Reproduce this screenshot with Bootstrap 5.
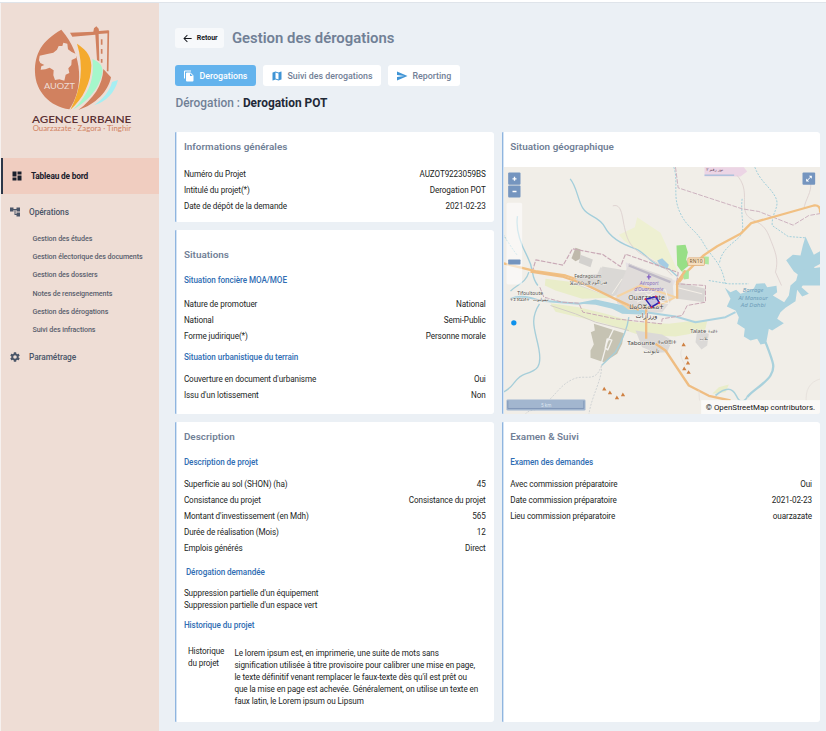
<!DOCTYPE html>
<html lang="fr">
<head>
<meta charset="utf-8">
<meta name="viewport" content="width=device-width, initial-scale=1">
<title>Gestion des dérogations</title>
<link rel="stylesheet" href="https://cdn.jsdelivr.net/npm/bootstrap@5.3.0/dist/css/bootstrap.min.css">
<style>
  body { font-family: Roboto, "Liberation Sans", sans-serif; font-size: 8.15px; line-height: 16px; color: #1b1e23; background: #ebf0f5; height: 731px; overflow: hidden; }
  .topline { height: 3px; background: #fff; border-bottom: 1px solid #dfe4ea; }
  .shell { height: 728px; }
  .side { width: 159.4px; background: #eeddd5; border-left: 1px solid #f6f1ef; flex: none; }
  .brand-area { height: 155px; }
  .side-link { height: 35px; color: #4a5568; font-size: 8.3px; letter-spacing: -.07px; font-weight: 500; padding-left: 8px; }
  .side-link svg { width: 12px; height: 12px; margin-right: 8px; }
  .side-link.current { height: 36px; background: #f0cdc0; color: #1a202c; letter-spacing: -.18px; font-weight: 700; border-left: 2px solid #2d3748; }
  .sub-links { padding: .8px 0 0 31.5px; font-size: 7.15px; letter-spacing: -.09px; font-weight: 500; color: #5a5f6e; line-height: 18.3px; }
  .content-area { padding: 25px 6px 0 16px; }
  .back { width: 48.5px; height: 20px; background: #f7f9fb; border-radius: 3px; font-size: 7px; font-weight: 700; color: #14171c; }
  .page-title { font-size: 14.9px; font-weight: 600; color: #718096; line-height: 20px; }
  .tabs-row { margin-top: 17px; gap: 7.5px; }
  .tab-btn { height: 21px; border-radius: 3px; background: #fff; color: #718096; font-size: 8.85px; font-weight: 500; padding-left: 8px; }
  .tab-btn svg { width: 12px; height: 12px; margin-right: 4px; }
  .tab-btn.on { background: #63b3ed; color: #fff; }
  .w-t1 { width: 80.5px; } .w-t2 { width: 117.5px; } .w-t3 { width: 71.5px; }
  .subtitle { font-size: 11.9px; font-weight: 500; color: #718096; line-height: 16px; margin-top: 9px; }
  .subtitle b { color: #1f2937; font-weight: 700; }
  .panels { margin-top: 21px; gap: 8px; }
  .panel { background: #fff; border-left: 1px solid #8fb5df; border-radius: 1px 3px 3px 1px; padding: 7px 8px 0 7.5px; letter-spacing: -.09px; box-shadow: inset 1px 0 0 #d3e3f4; }
  .panel h2 { font-size: 9.9px; font-weight: 600; line-height: 16px; color: #718096; margin: 0; letter-spacing: .03px; }
  .panel h3 { font-size: 8.15px; font-weight: 500; line-height: 16px; color: #2f6db3; margin: 0; letter-spacing: -.07px; }
  .col-a, .col-b { width: 318.3px; gap: 8px; }
  .h-info { height: 90px; } .h-sit { height: 184px; padding-top: 16.5px; } .h-map { height: 282px; } .h-low { height: 300px; }
  .g5 { margin-top: 5px !important; } .g6 { margin-top: 6px !important; } .g7 { margin-top: 7.5px !important; } .g8 { margin-top: 8.5px !important; } .g9 { margin-top: 9px !important; } .g11 { margin-top: 11px !important; }
  .tight { line-height: 12px; }
  .map-box { margin: 11.5px -8px 0 -6.5px; height: 247.5px; overflow: hidden; border-radius: 0 0 3px 0; letter-spacing: 0; }
  .hist { padding-left: 4px; margin-top: 12px; }
  .hist-label { width: 46.5px; flex: none; }
  .hist-text { padding-top: 2px; }
  .inset-2 { padding-left: 2px; }
</style>
<script src="https://cdn.jsdelivr.net/npm/bootstrap@5.3.0/dist/js/bootstrap.bundle.min.js"></script>
</head>
<body>
<div class="topline"></div>
<div class="shell d-flex">
  <aside class="side">
    <div class="brand-area">
      <svg class="d-block" width="158" height="155" viewBox="1 3 158 155">
        <g transform="scale(.33333)">
          <path d="M184 89C126 122 104 160 105 216C106 274 150 320 208 328C250 270 252 166 184 89Z" fill="#d1815f"/>
          <path d="M117 181L119 167L142 162L160 158L171 149L176 138L187 138L190 128L202 131L204 148L215 156L228 162L228 174L215 180L214 195L205 205L208 219L197 224L193 242L178 238L165 240L160 226L161 211L149 203L136 208L122 209L124 199L133 195L121 189Z" fill="#eeddd5"/>
          <path d="M231 131C251 146 272 159 274 196C274 247 248 299 211 329C244 266 252 199 231 131Z" fill="#f4aa2d"/>
          <path d="M277 177C291 184 306 190 308 212C302 262 262 306 220 328C257 292 286 247 277 177Z" fill="#a5f7cb"/>
          <path d="M310 207L333 232C326 272 286 315 235 330C280 296 308 256 310 207Z" fill="#d1815f"/>
          <path d="M336 246L354 240C344 280 317 305 282 316C309 296 329 274 336 246Z" fill="#a5eef2"/>
          <path d="M210 98L280 95L282 85L289 79L296 86L297 93L326 91V100L296 102L298 184L291 180L286 104L217 110Z" fill="#d1815f"/>
          <path d="M325 92L323 214M305 118V134M305 147V161M305 177V188" stroke="#d1815f" stroke-width="5" fill="none"/>
          <text x="132" y="267" font-size="25" textLength="93" lengthAdjust="spacingAndGlyphs" fill="#eeddd5" font-family="Lato, sans-serif">AUOZT</text>
          <text x="96" y="370" font-size="30" font-weight="600" textLength="298" lengthAdjust="spacingAndGlyphs" fill="#5a3033" font-family="Lato, sans-serif">AGENCE URBAINE</text>
          <text x="98" y="393" font-size="20" textLength="295" lengthAdjust="spacingAndGlyphs" fill="#d1815f" font-family="Lato, sans-serif">Ouarzazate · Zagora · Tinghir</text>
        </g>
      </svg>
    </div>
    <nav>
      <div class="side-link current d-flex align-items-center"><svg viewBox="0 0 24 24" fill="currentColor"><path d="M3 13h8V3H3v10zm0 8h8v-6H3v6zm10 0h8V11h-8v10zm0-18v6h8V3h-8z"/></svg>Tableau de bord</div>
      <div class="side-link d-flex align-items-center"><svg viewBox="0 0 24 24" fill="currentColor"><path d="M22 11V3h-7v3H9V3H2v8h7V8h2v10h4v3h7v-8h-7v3h-2V8h2v3z"/></svg>Opérations</div>
      <ul class="sub-links list-unstyled mb-0">
        <li>Gestion des études</li><li>Gestion électorique des documents</li><li>Gestion des dossiers</li><li>Notes de renseignements</li><li>Gestion des dérogations</li><li>Suivi des infractions</li>
      </ul>
      <div class="side-link d-flex align-items-center"><svg viewBox="0 0 24 24" fill="currentColor"><path d="M19.14 12.94c.04-.3.06-.61.06-.94s-.02-.64-.07-.94l2.03-1.58a.49.49 0 0 0 .12-.61l-1.92-3.32a.49.49 0 0 0-.59-.22l-2.39.96a7 7 0 0 0-1.62-.94l-.36-2.54A.48.48 0 0 0 13.92 2.4h-3.84a.48.48 0 0 0-.48.41l-.36 2.54c-.59.24-1.13.57-1.62.94l-2.39-.96a.49.49 0 0 0-.59.22L2.74 8.87a.48.48 0 0 0 .12.61l2.03 1.58a7.5 7.5 0 0 0 0 1.88l-2.03 1.58a.49.49 0 0 0-.12.61l1.92 3.32c.12.22.37.29.59.22l2.39-.96c.5.38 1.03.7 1.62.94l.36 2.54c.05.24.24.41.48.41h3.84c.24 0 .44-.17.47-.41l.36-2.54a7 7 0 0 0 1.62-.94l2.39.96c.22.08.47 0 .59-.22l1.92-3.32a.48.48 0 0 0-.12-.61zM12 15.6a3.6 3.6 0 1 1 0-7.2 3.6 3.6 0 0 1 0 7.2z"/></svg>Paramétrage</div>
    </nav>
  </aside>

  <main class="content-area flex-grow-1">
    <div class="d-flex align-items-center">
      <div class="back d-flex align-items-center justify-content-center me-2"><svg width="11" height="11" viewBox="0 0 24 24" class="me-1" fill="currentColor"><path d="M21 11H6.8l5.6-5.6L11 4l-8 8 8 8 1.4-1.4L6.8 13H21z"/></svg>Retour</div>
      <div class="page-title">Gestion des dérogations</div>
    </div>
    <div class="tabs-row d-flex">
      <div class="tab-btn on w-t1 d-flex align-items-center"><svg viewBox="0 0 24 24" fill="#fff"><path d="M16 1H4a2 2 0 0 0-2 2v14h2V3h12zm-1 4 6 6v10a2 2 0 0 1-2 2H8a2 2 0 0 1-2-2V7a2 2 0 0 1 2-2zm-1 7h5.500L14 6.500z"/></svg>Derogations</div>
      <div class="tab-btn w-t2 d-flex align-items-center"><svg viewBox="0 0 24 24" fill="#3f94d5"><path fill-rule="evenodd" d="M20.500 3l-.16.03L15 5.1 9 3 3.360 4.900a.5.5 0 0 0-.36.48V20.500c0 .28.22.5.5.5l.16-.03L9 18.900l6 2.100 5.640-1.900a.5.5 0 0 0 .36-.48V3.500a.5.5 0 0 0-.5-.5zM15 19l-6-2.110V5l6 2.110V19z"/></svg>Suivi des derogations</div>
      <div class="tab-btn w-t3 d-flex align-items-center"><svg viewBox="0 0 24 24" fill="#3f94d5"><path d="M2 21 23 12 2 3v7l15 2-15 2z"/></svg>Reporting</div>
    </div>
    <div class="subtitle">Dérogation : <b>Derogation POT</b></div>

    <div class="panels d-flex">
      <div class="col-a d-flex flex-column">
        <section class="panel h-info">
          <h2>Informations générales</h2>
          <div class="g11 d-flex justify-content-between"><span>Numéro du Projet</span><span>AUZOT9223059BS</span></div>
          <div class="d-flex justify-content-between"><span>Intitulé du projet(*)</span><span>Derogation POT</span></div>
          <div class="d-flex justify-content-between"><span>Date de dépôt de la demande</span><span>2021-02-23</span></div>
        </section>
        <section class="panel h-sit">
          <h2>Situations</h2>
          <h3 class="g9">Situation foncière MOA/MOE</h3>
          <div class="g8 d-flex justify-content-between"><span>Nature de promotuer</span><span>National</span></div>
          <div class="d-flex justify-content-between"><span>National</span><span>Semi-Public</span></div>
          <div class="d-flex justify-content-between"><span>Forme judirique(*)</span><span>Personne morale</span></div>
          <h3 class="g5">Situation urbanistique du terrain</h3>
          <div class="g6 d-flex justify-content-between"><span>Couverture en document d'urbanisme</span><span>Oui</span></div>
          <div class="d-flex justify-content-between"><span>Issu d'un lotissement</span><span>Non</span></div>
        </section>
        <section class="panel h-low">
          <h2>Description</h2>
          <h3 class="g9">Description de projet</h3>
          <div class="g6 d-flex justify-content-between"><span>Superficie au sol (SHON) (ha)</span><span>45</span></div>
          <div class="d-flex justify-content-between"><span>Consistance du projet</span><span>Consistance du projet</span></div>
          <div class="d-flex justify-content-between"><span>Montant d'investissement (en Mdh)</span><span>565</span></div>
          <div class="d-flex justify-content-between"><span>Durée de réalisation (Mois)</span><span>12</span></div>
          <div class="d-flex justify-content-between"><span>Emplois générés</span><span>Direct</span></div>
          <h3 class="g7 inset-2">Dérogation demandée</h3>
          <div class="g7 tight">Suppression partielle d'un équipement<br>Suppression partielle d'un espace vert</div>
          <h3 class="g6">Historique du projet</h3>
          <div class="hist d-flex tight">
            <div class="hist-label">Historique<br>du projet</div>
            <div class="hist-text text-nowrap">Le lorem ipsum est, en imprimerie, une suite de mots sans<br>signification utilisée à titre provisoire pour calibrer une mise en page,<br>le texte définitif venant remplacer le faux-texte dès qu'il est prêt ou<br>que la mise en page est achevée. Généralement, on utilise un texte en<br>faux latin, le Lorem ipsum ou Lipsum</div>
          </div>
        </section>
      </div>

      <div class="col-b d-flex flex-column">
        <section class="panel h-map">
          <h2>Situation géographique</h2>
          <div class="map-box">
            <svg class="d-block" width="317" height="247.5" viewBox="503.5 166.5 317 247.5" font-family="'Noto Sans', 'DejaVu Sans', sans-serif">
              <rect x="500" y="160" width="325" height="260" fill="#f1eee8"/>
              <!-- northern half -->
              <g transform="translate(495 125) scale(.33333)" fill="none" stroke-linejoin="round">
                <path d="M370 328L418 305L425 275L495 322L528 395L548 440L520 430L470 400L420 370L385 345Z" fill="#eef0d2"/>
                <path d="M627 125H745L755 138L735 153H627Z" fill="#ecd5e5"/>
                <path d="M627 149H716" stroke="#8fb8d8" stroke-width="3"/>
                <path d="M240 367L255 372V400L240 407L228 398Z" fill="#bfb9ab"/>
                <path d="M255 388L292 402L285 425L250 412Z" fill="#d3d1ce"/>
                <path d="M315 425L385 445L420 480H290Z" fill="#dcdad7"/>
                <path d="M390 410L540 466L532 482H400Z" fill="#e6e1e5"/>
                <path d="M399 417L525 473" stroke="#bdb8c6" stroke-width="7"/>
                <path d="M543 360L570 358L577 380L572 402L580 420L558 438L545 420Z" fill="#98df86"/>
                <path d="M618 392L640 394V417L622 414Z" fill="#aee79f"/>
                <path d="M485 405L500 398L520 418L515 433L496 424Z" fill="#a4cbe3"/>
                <path d="M930 333L942 360L955 388L975 376V415L955 425L975 440V480H905L918 455L895 438L872 404L892 388L915 390L922 360Z" fill="#abd2df"/>
                <path d="M224 160C245 185 245 220 262 248S310 270 328 305S390 360 420 370S465 420 520 430L545 452" stroke="#a3cedb" stroke-width="4"/>
                <path d="M66 272C60 310 70 345 95 392S103 450 127 480" stroke="#a3cedb" stroke-width="4"/>
                <path d="M535 125C550 170 530 210 553 260S600 310 625 355S680 410 690 480M778 125C795 170 825 185 840 215S828 260 830 300L878 333L930 337M740 220C735 255 745 295 740 320S680 360 672 412M22 325C38 350 50 370 66 390M640 465L700 475H760" stroke="#a2cfdb" stroke-width="3" stroke-dasharray="6 4"/>
                <path d="M352 241C390 230 375 310 405 355S490 400 530 450M725 150C760 190 740 230 750 260S800 280 820 330S850 400 840 440L858 480M945 170C950 200 930 220 925 250" stroke="#dccfce" stroke-width="2.5"/>
                <path d="M540 125L548 187L740 250L790 258L893 299L940 270L975 264" stroke="#cdb2bf" stroke-width="3" stroke-dasharray="14 4"/>
                <path d="M110 440L121 403L203 419L231 370L322 387L375 423L390 386L548 441L543 476" stroke="#c9a9b6" stroke-width="3.5" stroke-dasharray="14 4"/>
                <path d="M22 413L120 437L210 450L300 480M543 480L577 436L625 389L665 362L735 325L767 293L955 240Q975 237 974 262" stroke="#f1c083" stroke-width="7"/>
                <rect x="577" y="397" width="50" height="23" rx="3" fill="#f5dfc0" stroke="#dba66d" stroke-width="2"/>
                <text x="582" y="414" font-size="15" fill="#75552a" textLength="39">RN10</text>
                <text x="632" y="138" font-size="13" fill="#6f526b">نور رقم ٢</text>
              </g>
              <!-- southern half -->
              <g transform="translate(495 270) scale(.33333)" fill="none" stroke-linejoin="round">
                <path d="M150 25L235 35L300 60L345 82L260 85L180 60L148 45ZM165 98L250 110L330 130L420 155L520 160L600 150L635 152L628 182L540 198L430 193L330 160L240 138L180 124Z" fill="#e9edc9"/>
                <path d="M320 -12L425 5L410 30L375 70L345 80L230 38L250 15L320 10Z" fill="#dad8d5"/>
                <path d="M400 -20L530 25L535 80L500 125L430 130L365 98L360 78Z" fill="#e0dcda"/>
                <path d="M550 35L630 55L625 95L545 85Z" fill="#d9d6d3"/>
                <path d="M420 180L500 192L530 210L515 245L480 247L440 230ZM605 180L640 190L635 225L618 237L600 215Z" fill="#dbd9d7"/>
                <path d="M400 -15L525 35" stroke="#bdb8c6" stroke-width="7"/>
                <path d="M295 160L385 188L380 220L365 250L325 275L285 262V240L295 222L286 185L298 180Z" fill="#c6c3b3"/>
                <path d="M355 174L335 215L317 280M335 205l-6 28 8 5 12-29Z" stroke="#f3f1ed" stroke-width="4"/>
                <path d="M560 0H580V25L565 27Z" fill="#a9e69a"/>
                <path d="M650 370L670 350L700 342L690 365Z" fill="#e9edc9"/>
                <path d="M688 52L705 65L722 58L735 70L755 63L775 54L782 40L808 38L815 50L843 46L845 65L832 75L866 95L880 75L885 45L902 30L910 0L975 -10V28L930 30L918 50L940 70L920 78L905 58L900 92L870 112L855 125L845 145L865 158L830 180L820 175L812 218L795 222L785 205L765 210L745 198L748 175L725 160L730 140L720 120L694 108L705 85Z" fill="#abd2df"/>
                <path d="M45 85Q80 70 130 90L250 100L300 90L400 112L450 125L540 138L600 155L690 140L720 125" stroke="#abd2df" stroke-width="6"/>
                <path d="M245 99L300 90L380 105L450 120V133L380 130L350 115L300 103Z" fill="#abd2df"/>
                <path d="M45 62C65 40 90 40 100 5M132 100C100 150 120 180 130 235S125 300 90 310S60 350 22 365M400 140C395 180 380 210 360 245L318 285" stroke="#a6ced9" stroke-width="4"/>
                <path d="M810 215C835 280 840 290 825 315S770 360 755 380" stroke="#a9d1dc" stroke-width="7"/>
                <path d="M660 375C690 350 710 350 722 375S745 395 755 380" stroke="#a9d1dc" stroke-width="5"/>
                <path d="M318 285C300 340 270 310 235 325S190 360 155 395S110 410 90 430M318 285C320 330 290 370 280 432" stroke="#d0d3d4" stroke-width="3" stroke-dasharray="6 4"/>
                <path d="M133 50L145 80L200 95L250 98L262 125L360 145L498 160L500 145L560 135L575 105L630 95V45L545 40" stroke="#c9a9b6" stroke-width="3" stroke-dasharray="14 4"/>
                <path d="M165 105L240 130L300 155L400 180" stroke="#d3cdc8" stroke-width="3"/>
                <path d="M365 78L435 45L540 80L480 110L400 115L365 88" stroke="#f5d3a2" stroke-width="6"/>
                <path d="M420 65L510 58L520 100L465 88M450 68L500 95M425 95L475 65M540 50L620 70M235 35L360 85M380 25L350 70" stroke="#f5f0e8" stroke-width="3"/>
                <path d="M105 3L200 18L270 42L360 86L430 118M545 85V35L570 0M440 112H452V205" stroke="#efbd82" stroke-width="7"/>
                <path d="M480 220L510 240L550 300L580 345L640 376L705 390" stroke="#efbd82" stroke-width="7"/>
                <path d="M560 235C550 250 560 270 570 285M610 360L612 390M975 325C940 335 930 360 932 395" stroke="#e3dcd8" stroke-width="2"/>
                <path d="M454 19h13M460 12v15" stroke="#8461c4" stroke-width="4"/>
                <g fill="#cf8143"><path d="M558 227l6-11 7 11zM567 266l6-11 7 11zM571 282l6-11 7 11zM560 299l6-11 7 11zM573 310l6-11 7 11zM320 360l6-11 7 11zM337 371l6-11 7 11zM358 386l6-11 7 11zM376 377l6-11 7 11z"/></g>
                <g fill="#55534f" font-size="15" text-anchor="middle" stroke="#f8f6f2" stroke-width="2" paint-order="stroke">
                  <text x="277" y="24" textLength="82" lengthAdjust="spacingAndGlyphs">Fedragoum</text>
                  <text x="254" y="44" font-size="14" textLength="64" lengthAdjust="spacingAndGlyphs" font-family="DejaVu Sans">ⴼⴰⴷⵔⴰⴳ</text>
                  <text x="312" y="42" font-size="14">فدراگوم</text>
                  <text x="104" y="75" textLength="78" lengthAdjust="spacingAndGlyphs">Tifoultoute</text>
                  <text x="73" y="93" font-size="12" textLength="60" lengthAdjust="spacingAndGlyphs" font-family="DejaVu Sans">ⵜⵉⴼⵓⵍⵜ</text>
                  <text x="136" y="93" font-size="13">تيفولتوت</text>
                  <g fill="#3e3c3a">
                    <text x="453" y="89" font-size="20" textLength="110" lengthAdjust="spacingAndGlyphs">Ouarzazate</text>
                    <text x="453" y="117" font-size="20" textLength="104" lengthAdjust="spacingAndGlyphs" font-family="DejaVu Sans">ⵡⴰⵔⵣⴰⵣⴰⵜ</text>
                    <text x="453" y="143" font-size="20" textLength="64" lengthAdjust="spacingAndGlyphs">ورزازات</text>
                    <text x="437" y="223" font-size="18" textLength="84" lengthAdjust="spacingAndGlyphs">Tabounte</text>
                  </g>
                  <text x="514" y="222" font-size="16" textLength="58" lengthAdjust="spacingAndGlyphs" font-family="DejaVu Sans">ⵜⴰⴱⵓⵏⵜ</text>
                  <text x="468" y="248" font-size="18">تابونت</text>
                  <text x="608" y="189" font-size="14" textLength="48" lengthAdjust="spacingAndGlyphs">Talate</text>
                  <text x="652" y="188" font-size="13" textLength="30" lengthAdjust="spacingAndGlyphs" font-family="DejaVu Sans">ⵜⴰⵍⵜ</text>
                  <text x="625" y="209" font-size="14">تلات</text>
                </g>
                <g fill="#866dbe" font-size="14" font-style="italic" text-anchor="middle"><text x="461" y="45" textLength="56" lengthAdjust="spacingAndGlyphs">Aéroport</text><text x="460" y="63" textLength="88" lengthAdjust="spacingAndGlyphs">d'Ouarzazate</text></g>
                <g fill="#6f9eba" font-size="15" font-style="italic" text-anchor="middle"><text x="773" y="66" textLength="62" lengthAdjust="spacingAndGlyphs">Barrage</text><text x="773" y="88" textLength="88" lengthAdjust="spacingAndGlyphs">Al Mansour</text><text x="773" y="110" textLength="74" lengthAdjust="spacingAndGlyphs">Ad Dahbi</text></g>
                <path d="M450 86L481 79L491 96L468 110Z" fill="#b9b5df" fill-opacity=".7" stroke="#2c25b4" stroke-width="4.5"/>
                <g fill="#ef2540"><circle cx="450" cy="86" r="3"/><circle cx="481" cy="78" r="3"/><circle cx="491" cy="97" r="3"/><circle cx="468" cy="110" r="3"/></g>
                <circle cx="55" cy="157" r="8" fill="#0d91ec"/>
                <rect x="33" y="387" width="237" height="33" rx="4" fill="#a2b6cf"/>
                <path d="M37 391V414H265V391" stroke="#8298b9" stroke-width="3"/>
                <text x="152" y="409" font-size="14" fill="#dce5ef" text-anchor="middle" font-family="Roboto">5 km</text>
                <rect x="617" y="389" width="360" height="45" fill="#faf9f7"/>
                <text x="631" y="418" font-size="24" fill="#111" textLength="328" lengthAdjust="spacingAndGlyphs" font-family="Roboto">© OpenStreetMap contributors.</text>
              </g>
              <!-- map controls -->
              <g transform="translate(495 125) scale(.33333)">
                <rect x="33" y="232" width="47" height="245" rx="5" fill="#fff" opacity=".55"/>
                <g fill="#7595bf"><rect x="38" y="141" width="37" height="37" rx="3"/><rect x="38" y="180" width="37" height="36" rx="3"/><rect x="38" y="402" width="37" height="15" rx="2"/><rect x="921" y="141" width="38" height="37" rx="3"/></g>
                <path d="M51 160h12M57 154v12M51 198h12" stroke="#fff" stroke-width="4"/>
                <path d="M932 168v-9l9 9zM949 151v9l-9-9z" fill="#fff"/>
                <path d="M935 165L946 154" stroke="#fff" stroke-width="3"/>
              </g>
            </svg>
          </div>
        </section>
        <section class="panel h-low">
          <h2>Examen &amp; Suivi</h2>
          <h3 class="g9">Examen des demandes</h3>
          <div class="g6 d-flex justify-content-between"><span>Avec commission préparatoire</span><span>Oui</span></div>
          <div class="d-flex justify-content-between"><span>Date commission préparatoire</span><span>2021-02-23</span></div>
          <div class="d-flex justify-content-between"><span>Lieu commission préparatoire</span><span>ouarzazate</span></div>
        </section>
      </div>
    </div>
  </main>
</div>
</body>
</html>
